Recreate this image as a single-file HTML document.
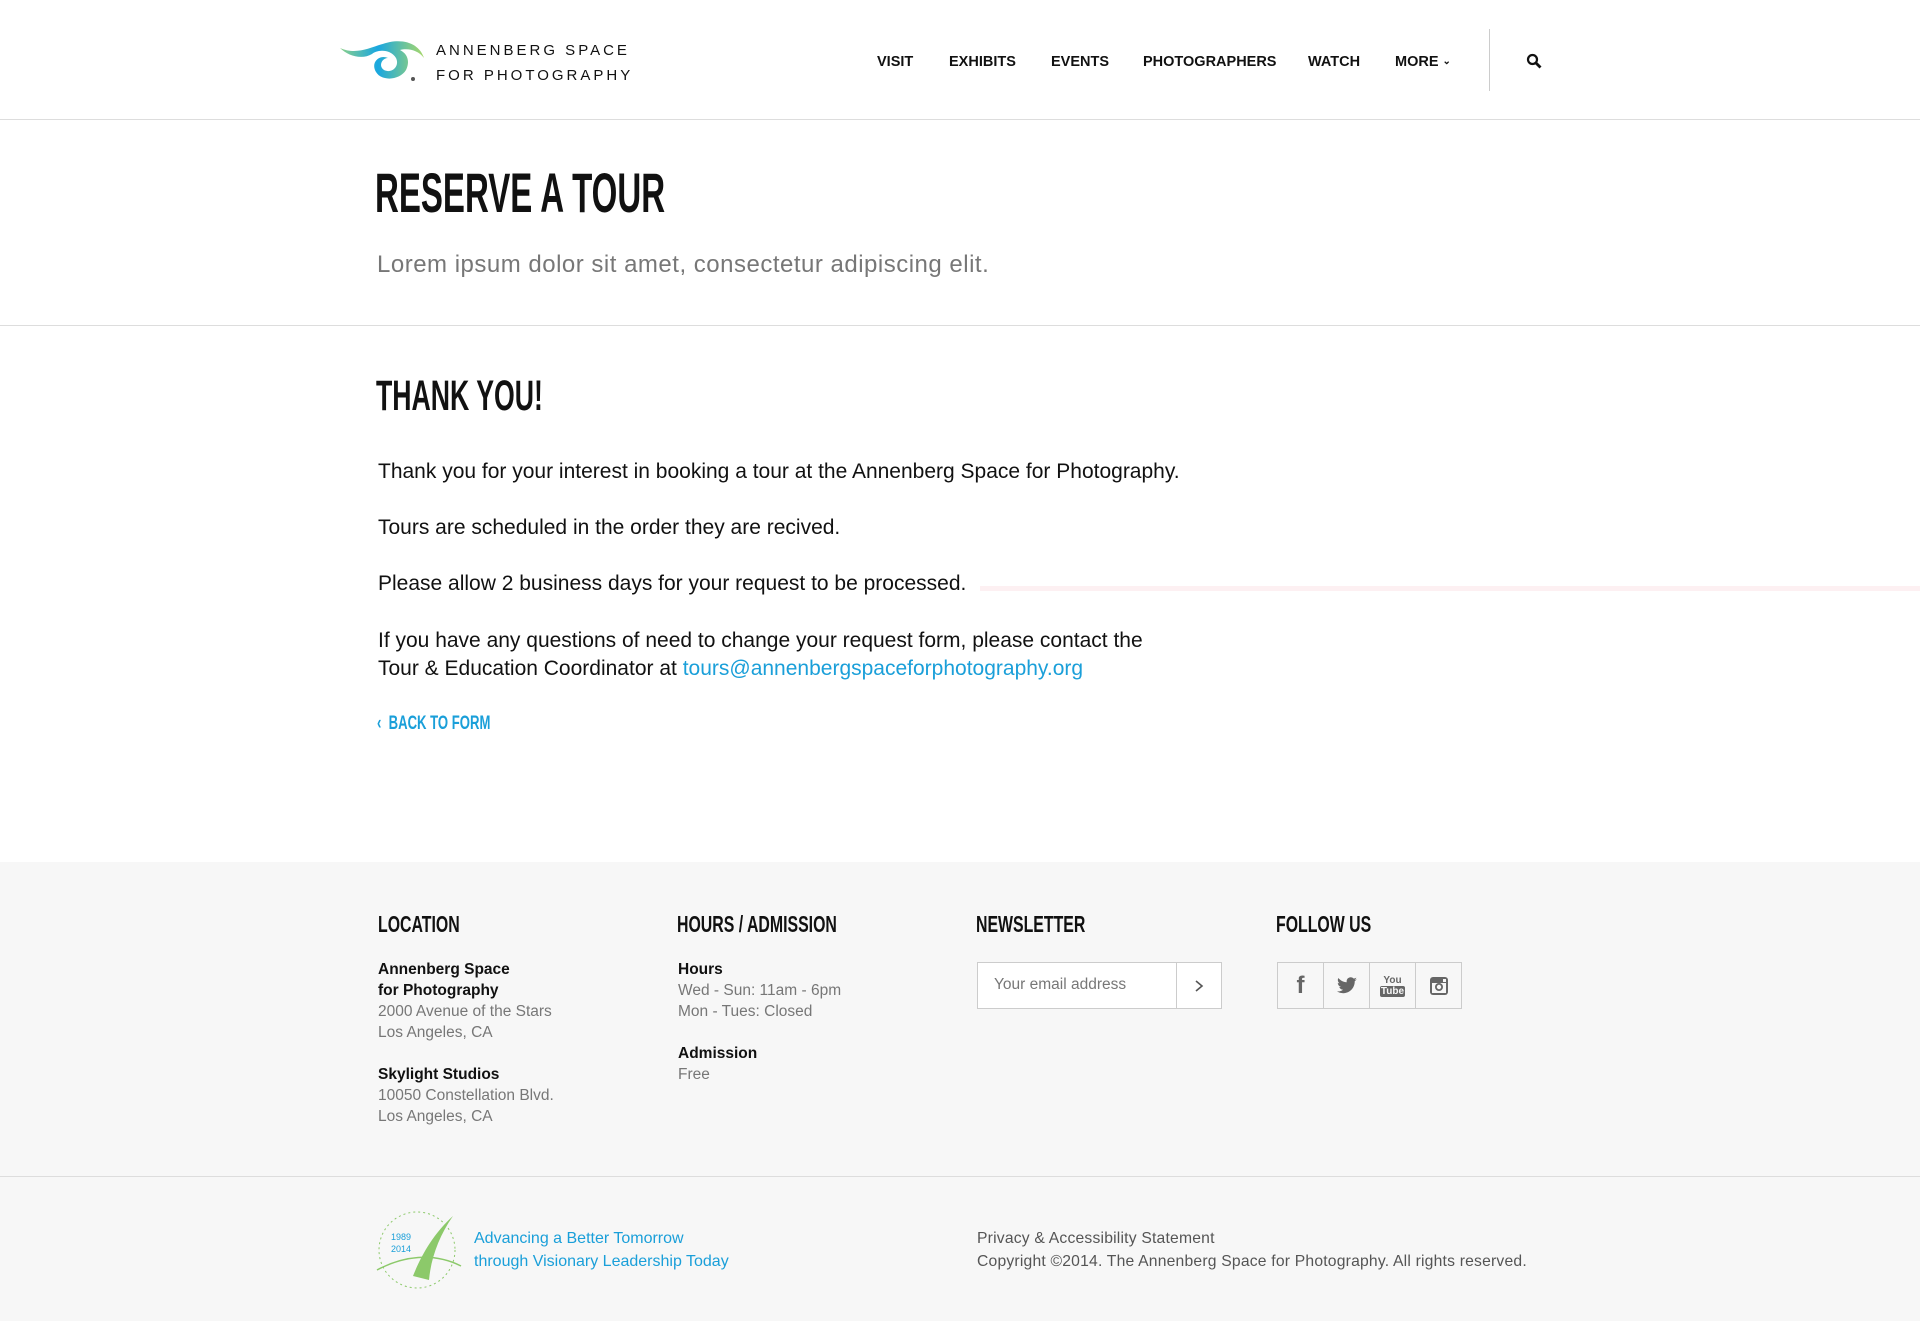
<!DOCTYPE html>
<html><head><meta charset="utf-8"><style>
*{margin:0;padding:0;box-sizing:border-box}
body{width:1920px;height:1321px;background:#fff;font-family:"Liberation Sans",sans-serif;color:#111;position:relative;overflow:hidden}
.a{position:absolute;white-space:nowrap}
.nav{font-weight:bold;font-size:14.5px;top:54px;color:#111}
.cond{font-family:"Liberation Sans Narrow","Liberation Sans",sans-serif;font-weight:bold;transform-origin:left}
.p{font-size:21px;left:378px;color:#111}
.fh{font-size:23px;top:911px;color:#111;transform:scaleX(.69)}
.ft{font-size:15.5px;line-height:21px;color:#777}
.ft b{color:#111}
.soc{position:absolute;top:962px;width:47px;height:47px;border:1px solid #ccc;display:flex;align-items:center;justify-content:center}
</style></head><body>
<div class="a" style="left:0;top:119px;width:1920px;height:1px;background:#ddd"></div>
<svg class="a" style="left:338px;top:36px" width="90" height="48" viewBox="0 0 90 48">
<defs><linearGradient id="g" x1="0" y1="0" x2="1" y2="0"><stop offset="0" stop-color="#8cd08a"/><stop offset=".45" stop-color="#19a7e0"/><stop offset="1" stop-color="#a9d86a"/></linearGradient></defs>
<path d="M2 12 C20 20 34 10 52 6 C70 3 82 10 86 22 C80 14 70 12 62 14 C70 18 72 26 68 34 C62 44 44 46 38 36 C32 26 42 18 50 22 C44 22 40 30 46 34 C54 38 62 30 58 22 C52 12 38 14 34 18 C24 24 10 20 2 12Z" fill="url(#g)"/>
<circle cx="75" cy="43" r="2" fill="#555"/></svg>
<div class="a" style="left:436px;top:38px;font-size:15px;letter-spacing:3px;line-height:25px;color:#111">ANNENBERG SPACE<br>FOR PHOTOGRAPHY</div>
<div class="a nav" style="left:877px">VISIT</div>
<div class="a nav" style="left:949px">EXHIBITS</div>
<div class="a nav" style="left:1051px">EVENTS</div>
<div class="a nav" style="left:1143px">PHOTOGRAPHERS</div>
<div class="a nav" style="left:1308px">WATCH</div>
<div class="a nav" style="left:1395px">MORE <span style="font-size:10px;position:relative;top:-2px">&#8964;</span></div>
<div class="a" style="left:1489px;top:29px;width:1px;height:62px;background:#ccc"></div>
<svg class="a" style="left:1526px;top:53px" width="16" height="16" viewBox="0 0 16 16"><circle cx="6.5" cy="6.5" r="4.5" fill="none" stroke="#111" stroke-width="2.2"/><path d="M10 10l4.5 4.5" stroke="#111" stroke-width="2.8"/></svg>
<div class="a cond" style="left:375px;top:163px;font-size:56px;line-height:60px;transform:scaleX(.59)">RESERVE A TOUR</div>
<div class="a" style="left:377px;top:251px;font-size:24px;letter-spacing:.5px;color:#777">Lorem ipsum dolor sit amet, consectetur adipiscing elit.</div>
<div class="a" style="left:0;top:325px;width:1920px;height:1px;background:#ddd"></div>
<div class="a cond" style="left:376px;top:373px;font-size:43px;line-height:46px;transform:scaleX(.62)">THANK YOU!</div>
<div class="a p" style="top:460px">Thank you for your interest in booking a tour at the Annenberg Space for Photography.</div>
<div class="a p" style="top:516px">Tours are scheduled in the order they are recived.</div>
<div class="a p" style="top:572px">Please allow 2 business days for your request to be processed.</div>
<div class="a" style="left:980px;top:586px;width:940px;height:5px;background:#fdf0f2"></div>
<div class="a p" style="top:627px;line-height:28px">If you have any questions of need to change your request form, please contact the<br>Tour &amp; Education Coordinator at <span style="color:#1a9fd9">tours@annenbergspaceforphotography.org</span></div>
<div class="a cond" style="left:377px;top:713px;font-size:19px;color:#1a9fd9;transform:scaleX(.69)">&#8249;&nbsp; BACK TO FORM</div>
<div class="a" style="left:0;top:862px;width:1920px;height:459px;background:#f7f7f7"></div>
<div class="a" style="left:0;top:1176px;width:1920px;height:1px;background:#ddd"></div>
<div class="a cond fh" style="left:378px">LOCATION</div>
<div class="a cond fh" style="left:677px">HOURS / ADMISSION</div>
<div class="a cond fh" style="left:976px">NEWSLETTER</div>
<div class="a cond fh" style="left:1276px">FOLLOW US</div>
<div class="a ft" style="left:378px;top:959px"><b>Annenberg Space<br>for Photography</b><br>2000 Avenue of the Stars<br>Los Angeles, CA<br><div style="height:21px"></div><b>Skylight Studios</b><br>10050 Constellation Blvd.<br>Los Angeles, CA</div>
<div class="a ft" style="left:678px;top:959px"><b>Hours</b><br>Wed - Sun: 11am - 6pm<br>Mon - Tues: Closed<div style="height:21px"></div><b>Admission</b><br>Free</div>
<div class="a" style="left:977px;top:962px;width:245px;height:47px;border:1px solid #ccc;background:#fff"></div>
<div class="a" style="left:1176px;top:962px;width:1px;height:47px;background:#ccc"></div>
<div class="a" style="left:994px;top:976px;font-size:15.5px;color:#777">Your email address</div>
<svg class="a" style="left:1193px;top:979px" width="12" height="14"><path d="M3 2l6 5-6 5" fill="none" stroke="#555" stroke-width="1.6"/></svg>
<div class="soc" style="left:1277px"><span style="font-weight:bold;font-size:24px;color:#666">f</span></div>
<div class="soc" style="left:1323px"><svg width="22" height="18" viewBox="0 0 24 20"><path d="M23 2.5c-.8.4-1.7.6-2.6.7.9-.6 1.6-1.4 2-2.5-.9.5-1.9.9-2.9 1.1C18.6.9 17.4.3 16.1.3c-2.5 0-4.5 2-4.5 4.5 0 .4 0 .7.1 1C7.9 5.6 4.6 3.8 2.4 1.1 2 1.800 1.8 2.5 1.8 3.4c0 1.6.8 2.9 2 3.7-.7 0-1.400-.2-2-.6 0 2.2 1.6 4 3.6 4.4-.4.1-.8.2-1.2.2-.3 0-.6 0-.8-.1.6 1.8 2.2 3.1 4.2 3.1-1.5 1.2-3.5 1.9-5.6 1.9H.9c2 1.3 4.4 2 6.9 2 8.3 0 12.8-6.9 12.8-12.8v-.6c.9-.6 1.7-1.4 2.4-2.3z" fill="#666"/></svg></div>
<div class="soc" style="left:1369px"><div style="text-align:center;font-weight:bold;color:#666;line-height:11px;font-size:10px">You<br><span style="background:#666;color:#f7f7f7;padding:0 1px;border-radius:2px">Tube</span></div></div>
<div class="soc" style="left:1415px"><svg width="20" height="20" viewBox="0 0 20 20"><rect x="1" y="1" width="18" height="18" rx="3" fill="#666"/><rect x="3" y="7" width="14" height="10" fill="#f7f7f7"/><circle cx="10" cy="11" r="4" fill="#666"/><circle cx="10" cy="11" r="2.2" fill="#f7f7f7"/><rect x="14" y="3" width="3" height="3" fill="#f7f7f7"/></svg></div>
<svg class="a" style="left:373px;top:1206px" width="92" height="88" viewBox="0 0 92 88">
<circle cx="44" cy="44" r="38" fill="none" stroke="#8cc96a" stroke-width="1" stroke-dasharray="2 3"/>
<path d="M4 64 C30 50 60 46 88 60" fill="none" stroke="#8cc96a" stroke-width="1.5"/>
<path d="M40 70 C48 50 60 28 80 10 C66 30 58 52 56 74Z" fill="#8cc96a"/>
<text x="18" y="34" font-size="9" fill="#1a9fd9" font-family="Liberation Sans">1989</text>
<text x="18" y="46" font-size="9" fill="#1a9fd9" font-family="Liberation Sans">2014</text></svg>
<div class="a" style="left:474px;top:1227px;font-size:16px;line-height:23px;color:#1a9fd9">Advancing a Better Tomorrow<br>through Visionary Leadership Today</div>
<div class="a" style="left:977px;top:1227px;font-size:15.7px;line-height:23px;color:#555;letter-spacing:.2px">Privacy &amp; Accessibility Statement<br>Copyright ©2014. The Annenberg Space for Photography. All rights reserved.</div>
</body></html>
